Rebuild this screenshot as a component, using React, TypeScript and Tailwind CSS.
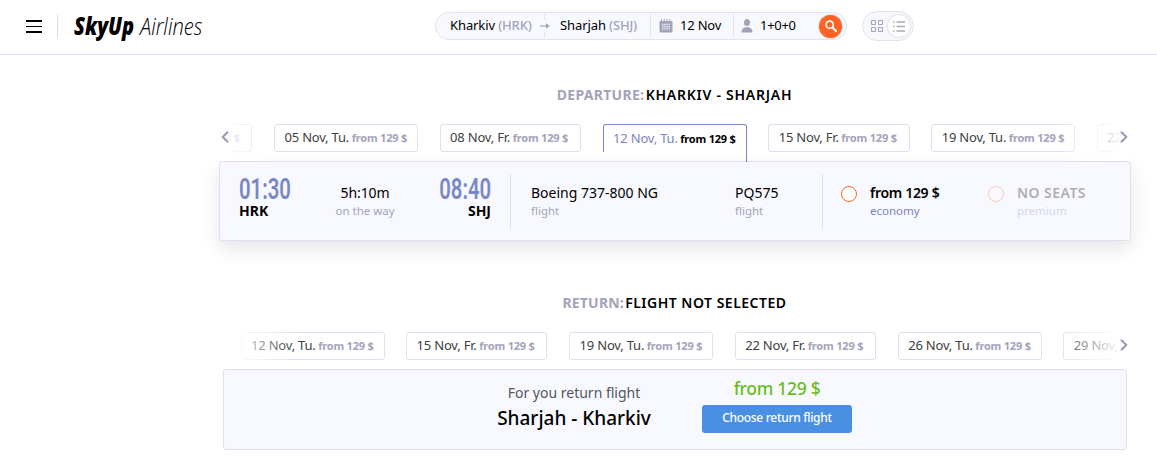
import clsx from "clsx"

type DateOption = { date: string; day: "Tu" | "Fr"; active?: boolean }

const departureDates: DateOption[] = [
  { date: "01 Nov", day: "Fr" },
  { date: "05 Nov", day: "Tu" },
  { date: "08 Nov", day: "Fr" },
  { date: "12 Nov", day: "Tu", active: true },
  { date: "15 Nov", day: "Fr" },
  { date: "19 Nov", day: "Tu" },
  { date: "22 Nov", day: "Fr" },
]

const returnDates: DateOption[] = [
  { date: "12 Nov", day: "Tu" },
  { date: "15 Nov", day: "Fr" },
  { date: "19 Nov", day: "Tu" },
  { date: "22 Nov", day: "Fr" },
  { date: "26 Nov", day: "Tu" },
  { date: "29 Nov", day: "Fr" },
]

function Chevron({ left }: { left?: boolean }) {
  return (
    <svg width="8" height="12" viewBox="0 0 8 12" fill="none" className={clsx(left && "rotate-180")}>
      <path d="M1 .8 6.300 6 1 11.200" stroke="#9c9cb6" strokeWidth="2.100" />
    </svg>
  )
}

function DateChip({ date, day, active }: DateOption) {
  return (
    <div
      className={clsx(
        "relative h-7 shrink-0 rounded-[3px] border pl-[9.5px] text-[13px] whitespace-nowrap",
        day === "Tu" ? "w-[144px]" : "w-[141.4px]",
        active
          ? "rounded-b-none border-b-0 border-[#7788c4] leading-[26px] text-[#7b85c4]"
          : "border-[#e0e0f0] leading-[25px] text-[#404040]"
      )}
    >
      <span className="tracking-[-0.2px]">
        {date}, {day}.
      </span>{" "}
      <span
        className={clsx(
          "-ml-[0.8px] text-[11px] font-bold tracking-[-0.2px]",
          active ? "text-black" : "text-[#a3a3bb]"
        )}
      >
        from 129 $
      </span>
      {active && <i className="absolute top-[26px] -right-px h-[11px] w-px bg-[#7788c4]" />}
    </div>
  )
}

function Header() {
  return (
    <header className="flex h-[55px] items-start border-b border-[#e0e0f0]">
      <div className="mt-5 ml-[26px] flex h-[13px] w-4 flex-col justify-between">
        <i className="h-0.5 bg-black" />
        <i className="h-px bg-black" />
        <i className="h-0.5 bg-black" />
      </div>
      <div className="mt-[15px] ml-[15px] h-6 w-px bg-[#dcdce0]" />
      <div className="mt-[9px] ml-4 flex w-[361px] font-['Open_Sans'] text-[24px] leading-[34px] italic">
        <span className="w-[66px]">
          <b className="inline-block origin-left scale-x-[0.83] font-extrabold">SkyUp</b>
        </span>
        <span className="inline-block origin-left scale-x-[0.84] font-light">Airlines</span>
      </div>

      <div className="mt-3 flex h-7 w-[412px] items-center rounded-full border border-[#e3e3f0] bg-[#f8f9fe] text-[13px]">
        <span className="ml-[14px] w-[89px] whitespace-nowrap tracking-[-0.1px]">
          Kharkiv <span className="font-medium tracking-[-0.2px] text-[#a3a3b8]">(HRK)</span>
        </span>
        <span className="flex h-6 w-[11px] flex-col items-center justify-between">
          <i className="h-[6px] w-px bg-[#e3e3f0]" />
          <svg width="10" height="6" viewBox="0 0 10 6" className="text-[#a3a3b8]">
            <path d="M0 3h7" stroke="currentColor" strokeWidth="1.2" />
            <path d="M6 .2 9.8 3 6 5.8z" fill="currentColor" />
          </svg>
          <i className="h-[6px] w-px bg-[#e3e3f0]" />
        </span>
        <span className="ml-[10px] w-[90px] whitespace-nowrap tracking-[-0.1px]">
          Sharjah <span className="font-medium tracking-[-0.2px] text-[#a3a3b8]">(SHJ)</span>
        </span>
        <span className="flex h-6 w-[83px] items-center border-l border-[#e3e3f0] pl-2">
          <svg width="14" height="14" viewBox="0 0 14 14">
            <path
              d="M1 2h1V0h1v2h1.7V0h1v2h1.8V0h1v2h1.8V0h1v2h1.2q1 0 1 1v9.500q0 1-1 1H1.500q-1 0-1-1V3q0-1 .5-1z"
              fill="#a3a3b8"
            />
            <path
              d="M3 5.500h1.500M5.200 5.500h1.500M7.400 5.500h1.500M9.600 5.500h1.500M3 7.700h1.500M5.200 7.700h1.500M7.400 7.700h1.500M9.600 7.700h1.500M3 9.900h1.500M5.200 9.900h1.500M7.400 9.900h1.500M9.600 9.900h1.500"
              stroke="#e8e9f2"
              strokeWidth="1.400"
            />
          </svg>
          <span className="ml-[7px] tracking-[-0.2px]">12 Nov</span>
        </span>
        <span className="flex h-6 w-[86px] items-center border-l border-[#e3e3f0] pl-[7px]">
          <svg width="12" height="14" viewBox="0 0 12 14" fill="#a3a3b8">
            <ellipse cx="6" cy="3.500" rx="3" ry="3.500" />
            <path d="M.5 13.500C.5 10 2.500 8.300 6 8.300s5.500 1.700 5.500 5.200z" />
          </svg>
          <span className="ml-[7px] tracking-[-0.3px]">1+0+0</span>
        </span>
        <span className="flex size-[23px] items-center justify-center rounded-full bg-[#ff6424] shadow-[0_0_2px_#b0b0b0]">
          <svg width="12" height="12" viewBox="0 0 12 12" fill="none" stroke="#fff">
            <circle cx="4.700" cy="4.700" r="3.600" strokeWidth="1.600" />
            <path d="m7.500 7.500 3.500 3.500" strokeWidth="2" strokeLinecap="round" />
          </svg>
        </span>
      </div>

      <div className="mt-[11px] ml-[15px] flex h-[30px] w-[52px] items-center rounded-full border border-[#e3e3f0] bg-[#f8f9fe] pl-[7px]">
        <svg width="13" height="13" viewBox="0 0 13 13" fill="none" stroke="#a3a3b8">
          <path d="M1.500.5h4v4h-4zM8.500.5h4v4h-4zM1.500 7.500h4v4h-4zM8.500 7.500h4v4h-4z" />
        </svg>
        <span className="ml-[5px] flex size-[22px] items-center justify-center rounded-full bg-white shadow-[0_0_3px_#c4c6d4]">
          <svg width="12" height="11" viewBox="0 0 12 11" stroke="#a9a9bd" strokeWidth="1.300">
            <path d="M0 1h1.500M0 5.500h1.500M0 10h1.500M3.500 1H12M3.500 5.500H12M3.500 10H12" />
          </svg>
        </span>
      </div>
    </header>
  )
}

function Time({ value, code, right }: { value: string; code: string; right?: boolean }) {
  return (
    <div className={clsx("mt-4 w-[60px]", right && "text-right")}>
      <div className="h-6 font-['Roboto'] text-[29px] leading-[23px] font-semibold text-[#7988c6]">
        <span
          className={clsx("inline-block scale-x-[0.7]", right ? "-ml-5 origin-right" : "origin-left")}
        >
          {value}
        </span>
      </div>
      <div className="text-[14px] leading-[18px] font-bold">{code}</div>
    </div>
  )
}

function Fare({ title, cabin, disabled }: { title: string; cabin: string; disabled?: boolean }) {
  return (
    <div className={clsx("flex", disabled && "opacity-30")}>
      <i className="mt-6 size-4 rounded-full border border-[#ff6424] bg-white" />
      <div className="mt-[22px] ml-[13px] whitespace-nowrap">
        <div
          className={clsx(
            "text-[14px] leading-[18px] font-semibold",
            disabled ? "tracking-[0.45px]" : "tracking-[-0.3px]"
          )}
        >
          {title}
        </div>
        <div className="text-[11.5px] leading-[18px] text-[#7b85c4]">{cabin}</div>
      </div>
    </div>
  )
}

export default function App() {
  return (
    <div className="h-[457px] w-[1157px] overflow-hidden bg-white font-['Noto_Sans',sans-serif] text-black">
      <Header />

      <section>
        <h2 className="mt-[30px] ml-[192px] text-center text-[14px] leading-5 font-semibold tracking-[0.75px]">
          <span className="mr-[-3px] font-bold tracking-[0.3px] text-[#a3a3bb]">DEPARTURE:</span> KHARKIV - SHARJAH
        </h2>
        <div className="relative mt-[19px] ml-[219px] h-[37px] w-[911px]">
          <div className="flex h-[38px] w-full gap-[21.6px] overflow-hidden pl-[0.3px]">
            <div className="-ml-[108.3px] shrink-0">
              <DateChip {...departureDates[0]} />
            </div>
            {departureDates.slice(1).map((d) => (
              <DateChip key={d.date} {...d} />
            ))}
          </div>
          <div className="absolute inset-y-0 left-0 w-14 bg-linear-to-r from-white from-10% to-white/0" />
          <div className="absolute inset-y-0 right-0 w-[72px] bg-linear-to-l from-white from-10% to-white/0" />
          <span className="absolute top-[7px] left-[2px]">
            <Chevron left />
          </span>
          <span className="absolute top-[7px] right-[2px]">
            <Chevron />
          </span>
        </div>

        <div className="ml-[219px] flex h-20 w-[912px] rounded-[3px] border border-[#e0e0f0] bg-[#f8f9fe] shadow-[0_8px_20px_rgba(0,0,0,0.1)]">
          <div className="flex w-[290px] justify-between pr-[19px] pl-[19px]">
            <Time value="01:30" code="HRK" />
            <div className="mt-[22px] text-center">
              <div className="text-[14px] leading-[18px] tracking-[-0.1px]">5h:10m</div>
              <div className="text-[11.5px] leading-[18px] text-[#a3a3bb]">on the way</div>
            </div>
            <Time value="08:40" code="SHJ" right />
          </div>
          <div className="mt-3 flex h-[55px] w-[313px] border-x border-[#e0e0f0] pt-[10px] pl-5">
            <div className="w-[204px]">
              <div className="text-[14px] leading-[18px]">Boeing 737-800 NG</div>
              <div className="text-[11.5px] leading-[18px] text-[#a3a3bb]">flight</div>
            </div>
            <div>
              <div className="text-[14px] leading-[18px]">PQ575</div>
              <div className="text-[11.5px] leading-[18px] text-[#a3a3bb]">flight</div>
            </div>
          </div>
          <div className="flex pl-[18px]">
            <div className="w-[147px]">
              <Fare title="from 129 $" cabin="economy" />
            </div>
            <Fare title="NO SEATS" cabin="premium" disabled />
          </div>
        </div>
      </section>

      <section>
        <h2 className="mt-[52px] ml-[192px] text-center text-[14px] leading-5 font-semibold tracking-[0.5px]">
          <span className="mr-[-3px] font-bold tracking-[0.2px] text-[#a3a3bb]">RETURN:</span> FLIGHT NOT SELECTED
        </h2>
        <div className="relative mt-[19px] ml-[219px] h-[37px] w-[911px]">
          <div className="flex w-full gap-[21.6px] overflow-hidden pl-[21.5px]">
            {returnDates.map((d) => (
              <DateChip key={d.date} {...d} />
            ))}
          </div>
          <div className="absolute inset-y-0 left-0 h-7 w-[76px] bg-linear-to-r from-white from-10% to-white/0" />
          <div className="absolute inset-y-0 right-0 h-7 w-[76px] bg-linear-to-l from-white from-10% to-white/0" />
          <span className="absolute top-[7px] right-[2px]">
            <Chevron />
          </span>
        </div>

        <div className="ml-[223px] flex h-[81px] w-[904px] rounded-[3px] border border-[#e0e0f0] bg-[#f8f9fe]">
          <div className="mt-[14px] ml-[250px] w-[200px] text-center whitespace-nowrap">
            <div className="text-[14px] leading-[18px] text-[#555560]">For you return flight</div>
            <div className="text-[19px] leading-[32px] font-medium">Sharjah - Kharkiv</div>
          </div>
          <div className="mt-[6px] ml-7 w-[150px] text-center">
            <div className="text-[17.5px] leading-[24px] font-medium tracking-[-0.3px] text-[#6bbd1b]">from 129 $</div>
            <button className="mt-[5px] h-7 w-full rounded-[3px] bg-[#4a90e2] pb-[2px] text-[12px] font-medium tracking-[-0.3px] text-white">
              Choose return flight
            </button>
          </div>
        </div>
      </section>
    </div>
  )
}
